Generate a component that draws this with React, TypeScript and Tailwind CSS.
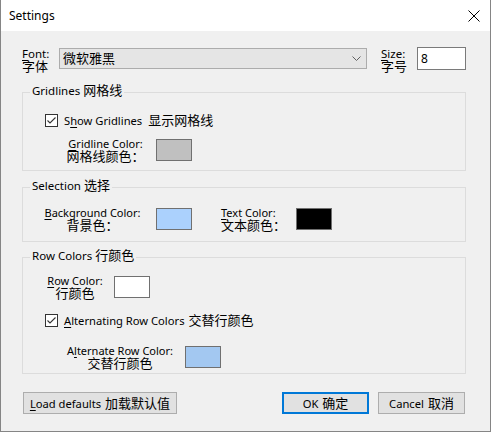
import React, { useState } from "react";

const FONT = "font-['Noto_Sans','Noto_Sans_CJK_SC',sans-serif]";

function Zh({ children }: { children: React.ReactNode }) {
  return <span className="text-[13px]">{children}</span>;
}

function Mn({ children }: { children: React.ReactNode }) {
  return <span className="underline underline-offset-[2px] decoration-[1px]">{children}</span>;
}

function CheckBox({ checked, onToggle }: { checked: boolean; onToggle: () => void }) {
  return (
    <button
      type="button"
      onClick={onToggle}
      className="w-[13px] h-[13px] border border-[#333333] bg-white flex items-center justify-center shrink-0"
    >
      {checked && (
        <svg width="11" height="11" viewBox="0 0 11 11">
          <polyline points="1.5,5.5 4,8 9.5,2.5" fill="none" stroke="#333333" strokeWidth="1.1" />
        </svg>
      )}
    </button>
  );
}

function Swatch({ color }: { color: string }) {
  return (
    <div
      className="w-[36px] h-[22px] border border-[#707070] shrink-0"
      style={{ backgroundColor: color }}
    />
  );
}

function Group({
  title,
  children,
  className,
}: {
  title: React.ReactNode;
  children: React.ReactNode;
  className?: string;
}) {
  return (
    <fieldset className={"border border-[#dcdcdc] mx-0 " + (className ?? "")}>
      <legend className="ml-[7px] px-[2px] leading-[13px] pb-[3px] text-[11.5px]">{title}</legend>
      {children}
    </fieldset>
  );
}

export default function App() {
  const [showGrid, setShowGrid] = useState(true);
  const [alternating, setAlternating] = useState(true);
  const [size, setSize] = useState("8");

  return (
    <div
      className={
        "w-[491px] h-[432px] flex flex-col bg-[#f0f0f0] border-x border-b border-[#858585] text-[11px] leading-[13px] text-black " +
        FONT
      }
    >
      {/* title bar */}
      <div className="h-[31px] bg-white flex items-center justify-between pl-[8px] pr-[9px] shrink-0">
        <span className="text-[12px] leading-[13px] mt-[-1px]">Settings</span>
        <svg width="12" height="12" viewBox="0 0 12 12" className="mr-[1px]">
          <path d="M0.5 0.5 L11.5 11.5 M11.5 0.5 L0.5 11.5" stroke="#000" strokeWidth="1" fill="none" />
        </svg>
      </div>

      <div className="flex flex-col pl-[21px] pr-[24px]">
        {/* font row */}
        <div className="flex items-start mt-[16px] h-[26px]">
          <div className="w-[37px] flex flex-col">
            <span className="text-[11.5px]"><Mn>F</Mn>ont:</span>
            <Zh>字体</Zh>
          </div>
          <div className="w-[308px] h-[21px] mt-[1px] bg-[#e5e5e5] border border-[#acacac] flex items-center justify-between pl-[3px] pr-[5px]">
            <Zh>微软雅黑</Zh>
            <svg width="9" height="5" viewBox="0 0 9 5">
              <polyline points="0.5,0.5 4.5,4.5 8.5,0.5" fill="none" stroke="#606060" strokeWidth="1" />
            </svg>
          </div>
          <div className="ml-[14px] w-[36px] flex flex-col">
            <span className="text-[11.5px]"><Mn>S</Mn>ize:</span>
            <Zh>字号</Zh>
          </div>
          <input
            value={size}
            onChange={(e) => setSize(e.target.value)}
            className="w-[49px] h-[23px] bg-white border border-[#7a7a7a] px-[3px] text-[12px] outline-none"
          />
        </div>

        {/* gridlines */}
        <Group title={<>Gridlines <Zh>网格线</Zh></>} className="mt-[11px] pb-[7px]">
          <div className="flex items-center mt-[14px] ml-[22px]">
            <CheckBox checked={showGrid} onToggle={() => setShowGrid(!showGrid)} />
            <span className="ml-[6px] text-[11.2px]">S<Mn>h</Mn>ow Gridlines</span>
            <span className="ml-[6px]"><Zh>显示网格线</Zh></span>
          </div>
          <div className="flex items-center mt-[10px]">
            <div className="ml-[37px] w-[91px] flex flex-col items-center">
              <span><Mn>G</Mn>ridline Color:</span>
              <Zh>网格线颜色：</Zh>
            </div>
            <div className="ml-[5px]">
              <Swatch color="#c0c0c0" />
            </div>
          </div>
        </Group>

        {/* selection */}
        <Group title={<>Selection <Zh>选择</Zh></>} className="mt-[8px] pb-[9px]">
          <div className="flex items-center mt-[11px]">
            <div className="ml-[17px] w-[105px] flex flex-col items-center">
              <span><Mn>B</Mn>ackground Color:</span>
              <Zh>背景色：</Zh>
            </div>
            <div className="ml-[11px]">
              <Swatch color="#abd1fd" />
            </div>
            <div className="ml-[29px] w-[75px] flex flex-col items-start">
              <span><Mn>T</Mn>ext Color:</span>
              <Zh>文本颜色：</Zh>
            </div>
            <Swatch color="#000000" />
          </div>
        </Group>

        {/* row colors */}
        <Group title={<>Row Colors <Zh>行颜色</Zh></>} className="mt-[7px] pb-[3px]">
          <div className="flex items-center mt-[9px]">
            <div className="ml-[17px] w-[70px] flex flex-col items-center">
              <span><Mn>R</Mn>ow Color:</span>
              <Zh>行颜色</Zh>
            </div>
            <div className="ml-[4px]">
              <Swatch color="#ffffff" />
            </div>
          </div>
          <div className="flex items-center mt-[14px] ml-[22px]">
            <CheckBox checked={alternating} onToggle={() => setAlternating(!alternating)} />
            <span className="ml-[6px] text-[11.2px]"><Mn>A</Mn>lternating Row Colors</span>
            <span className="ml-[4px]"><Zh>交替行颜色</Zh></span>
          </div>
          <div className="flex items-center mt-[17px]">
            <div className="ml-[37px] w-[120px] flex flex-col items-center">
              <span>A<Mn>l</Mn>ternate Row Color:</span>
              <Zh>交替行颜色</Zh>
            </div>
            <div className="ml-[5px]">
              <Swatch color="#a3c8f1" />
            </div>
          </div>
        </Group>

        {/* buttons */}
        <div className="flex items-center mt-[18px]">
          <button className="ml-[1px] w-[154px] h-[22px] bg-[#e1e1e1] border border-[#adadad] flex items-center justify-center">
            <span className="text-[11.2px]"><Mn>L</Mn>oad defaults</span>
            <span className="ml-[4px]"><Zh>加载默认值</Zh></span>
          </button>
          <button className="ml-auto w-[87px] h-[22px] bg-[#e1e1e1] border-2 border-[#0078d7] flex items-center justify-center">
            <span className="text-[11.2px]">OK</span>
            <span className="ml-[4px]"><Zh>确定</Zh></span>
          </button>
          <button className="ml-[9px] mr-[1px] w-[87px] h-[22px] bg-[#e1e1e1] border border-[#adadad] flex items-center justify-center">
            <span className="text-[11.2px]">Cancel</span>
            <span className="ml-[4px]"><Zh>取消</Zh></span>
          </button>
        </div>
      </div>
    </div>
  );
}
